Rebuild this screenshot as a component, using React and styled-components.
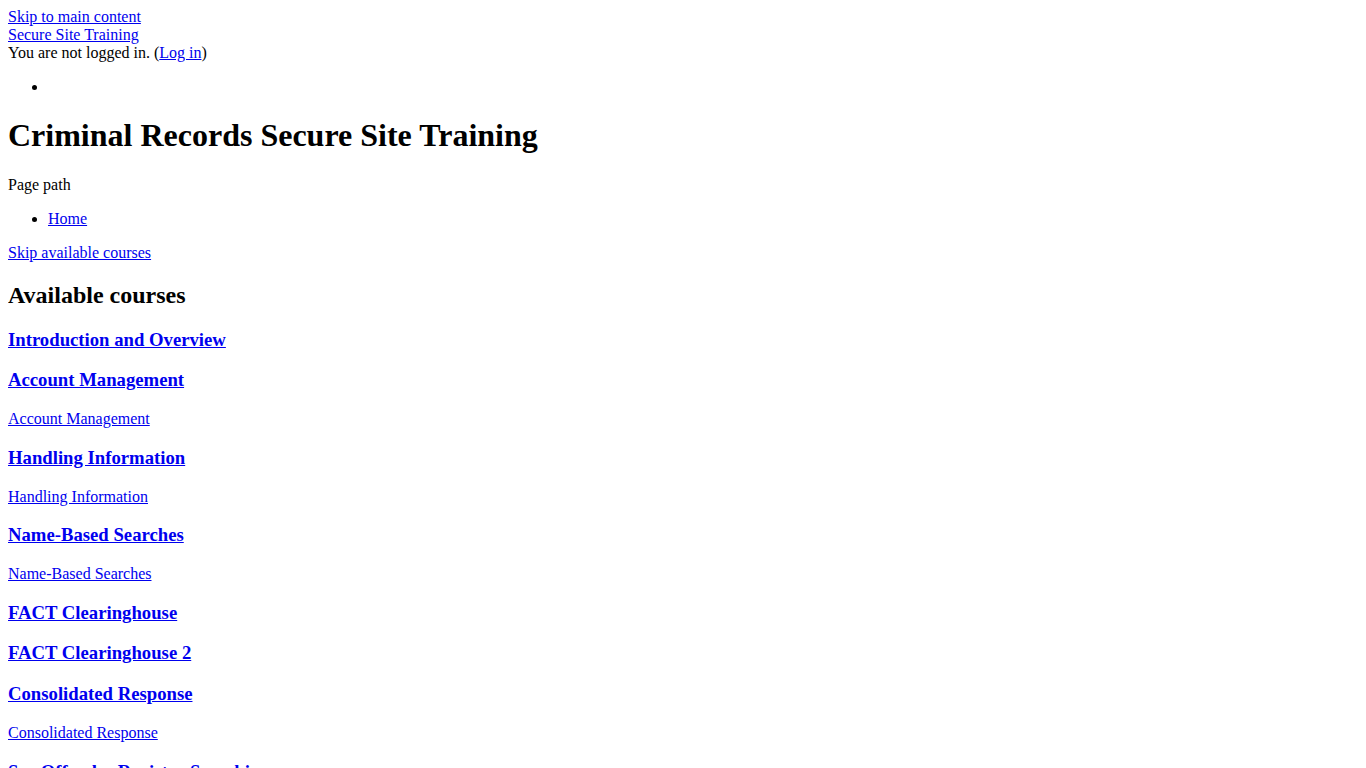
import React from "react";
import styled, { createGlobalStyle } from "styled-components";

const Global = createGlobalStyle`
  html, body { background: #fff; }
  body {
    margin: 8px;
    font-family: "Liberation Serif", "Times New Roman", serif;
    font-size: 16px;
    color: #000;
  }
`;

const Link = styled.a`
  color: #0000ee;
  text-decoration: underline;
`;

const Line = styled.div`
  line-height: normal;
`;

const BulletList = styled.ul`
  margin: 16px 0;
  padding-left: 40px;
  list-style: disc;
`;

const Item = styled.li`
  min-height: ${(p) => (p.$empty ? "18px" : "auto")};
`;

const Title = styled.h1`
  font-size: 32px;
  font-weight: bold;
  margin: 21.44px 0;
`;

const Path = styled.div``;

const SectionTitle = styled.h2`
  font-size: 24px;
  font-weight: bold;
  margin: 19.92px 0;
`;

const CourseTitle = styled.h3`
  font-size: 18.72px;
  font-weight: bold;
  margin: 18.72px 0;
`;

const Summary = styled.div`
  margin: 16px 0;
`;

const courses = [
  { name: "Introduction and Overview" },
  { name: "Account Management", summary: "Account Management" },
  { name: "Handling Information", summary: "Handling Information" },
  { name: "Name-Based Searches", summary: "Name-Based Searches" },
  { name: "FACT Clearinghouse" },
  { name: "FACT Clearinghouse 2" },
  { name: "Consolidated Response", summary: "Consolidated Response" },
  { name: "Sex Offender Registry Searching", summary: "Sex Offender Registry Searching" },
];

export default function App() {
  return (
    <>
      <Global />
      <Line><Link href="#main">Skip to main content</Link></Line>
      <Line><Link href="#">Secure Site Training</Link></Line>
      <Line>You are not logged in. (<Link href="#">Log in</Link>)</Line>
      <BulletList>
        <Item $empty />
      </BulletList>
      <Title>Criminal Records Secure Site Training</Title>
      <Path>Page path</Path>
      <BulletList>
        <Item><Link href="#">Home</Link></Item>
      </BulletList>
      <Line><Link href="#skip">Skip available courses</Link></Line>
      <SectionTitle>Available courses</SectionTitle>
      {courses.map((c) => (
        <React.Fragment key={c.name}>
          <CourseTitle><Link href="#">{c.name}</Link></CourseTitle>
          {c.summary && (
            <Summary><Link href="#">{c.summary}</Link></Summary>
          )}
        </React.Fragment>
      ))}
    </>
  );
}
